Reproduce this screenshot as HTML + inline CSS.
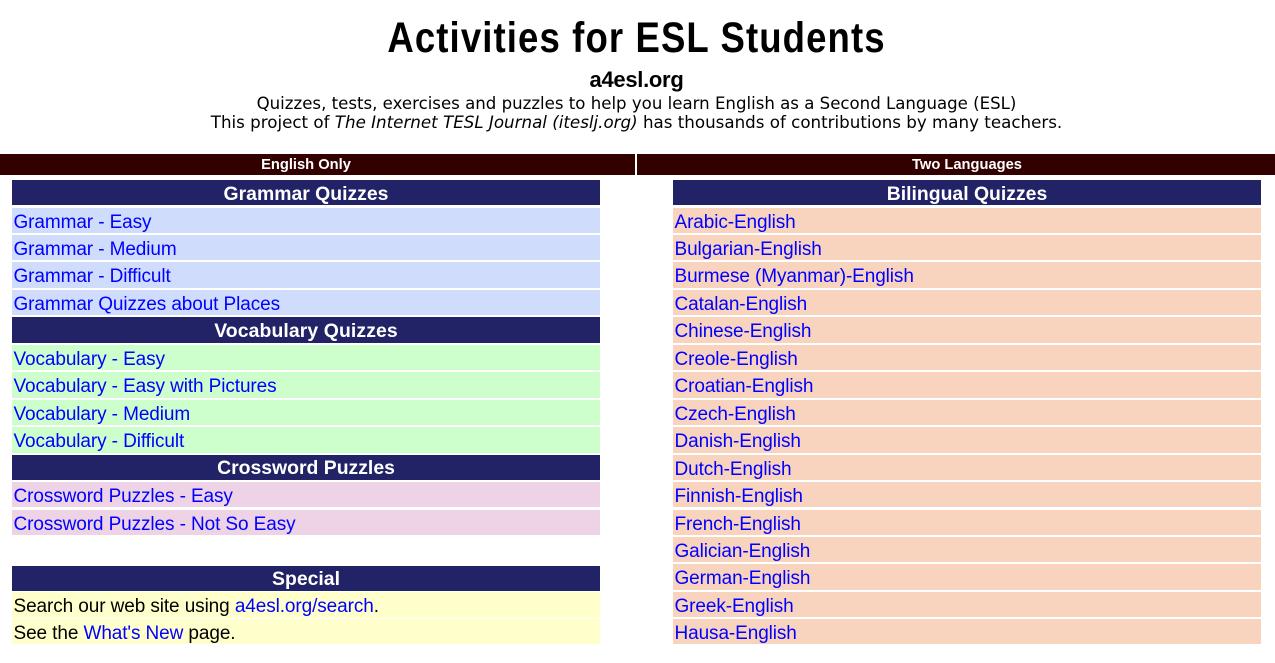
<!DOCTYPE html>
<html><head><meta charset="utf-8"><title>Activities for ESL Students</title>
<style>
html,body{margin:0;padding:0;background:#fff;width:1275px;height:663px;overflow:hidden}
body{position:relative;font-family:"Liberation Sans",Arial,sans-serif;color:#000}
a{color:#0000ff;text-decoration:none}
.c{position:absolute;white-space:nowrap}
.ti{left:0;width:1275px;text-align:center}
.t{font-family:"DejaVu Sans",sans-serif;font-size:16.6px;line-height:19px;left:0;width:1273px;text-align:center;position:absolute;white-space:nowrap}
.bar{position:absolute;top:154px;height:21px;background:#330000;color:#fff;font-weight:bold;font-size:14.7px;line-height:23px;text-align:center;box-sizing:border-box}
.r,.h{position:absolute;width:588px;white-space:nowrap;box-sizing:border-box}
.h{background:#222266;color:#fff;font-weight:bold;text-align:center;font-size:19.4px;line-height:28px}
.r{padding-left:1.5px;font-size:19px;letter-spacing:-.1px;line-height:29px}
.L{left:12px}.R{left:673px}
.b{background:#cfdcfb}.g{background:#ccffcc}.p{background:#eed2e6}.y{background:#ffffcc}.o{background:#f8d4be}
</style></head><body>
<div class="c ti" style="top:13px;font:bold 43px/50px 'Liberation Sans',sans-serif;letter-spacing:1.3px;left:-1px;transform:scaleX(.85)">Activities for ESL Students</div>
<div class="c ti" style="top:66px;font:bold 22px/28px 'Liberation Sans',sans-serif;letter-spacing:-.3px;left:-1px">a4esl.org</div>
<div class="t" style="top:94px">Quizzes, tests, exercises and puzzles to help you learn English as a Second Language (ESL)</div>
<div class="t" style="top:113px;font-size:16.7px">This project of <i>The Internet TESL Journal (iteslj.org)</i> has thousands of contributions by many teachers.</div>
<div class="bar" style="left:0;width:635px;padding-right:23px">English Only</div>
<div class="bar" style="left:637px;width:638px"><span style="position:relative;left:11px">Two Languages</span></div>

<div class="h L" style="top:180px;height:25px">Grammar Quizzes</div>
<div class="r L b" style="top:208px;height:25px"><a href="#">Grammar - Easy</a></div>
<div class="r L b" style="top:235px;height:25px"><a href="#">Grammar - Medium</a></div>
<div class="r L b" style="top:262px;height:26px"><a href="#">Grammar - Difficult</a></div>
<div class="r L b" style="top:290px;height:25px"><a href="#">Grammar Quizzes about Places</a></div>
<div class="h L" style="top:317px;height:26px;letter-spacing:.1px">Vocabulary Quizzes</div>
<div class="r L g" style="top:345px;height:25px"><a href="#">Vocabulary - Easy</a></div>
<div class="r L g" style="top:372px;height:26px"><a href="#">Vocabulary - Easy with Pictures</a></div>
<div class="r L g" style="top:400px;height:25px"><a href="#">Vocabulary - Medium</a></div>
<div class="r L g" style="top:427px;height:26px"><a href="#">Vocabulary - Difficult</a></div>
<div class="h L" style="top:455px;height:25px;line-height:26px">Crossword Puzzles</div>
<div class="r L p" style="top:482px;height:25px"><a href="#">Crossword Puzzles - Easy</a></div>
<div class="r L p" style="top:510px;height:25px"><a href="#">Crossword Puzzles - Not So Easy</a></div>
<div class="h L" style="top:566px;height:25px;line-height:26px">Special</div>
<div class="r L y" style="top:592px;height:26px;line-height:30px">Search our web site using <a href="#">a4esl.org/search</a>.</div>
<div class="r L y" style="top:619px;height:25px;line-height:30px">See the <a href="#">What's New</a> page.</div>

<div class="h R" style="top:180px;height:25px">Bilingual Quizzes</div>
<div class="r R o" style="top:208px;height:25px"><a href="#">Arabic-English</a></div>
<div class="r R o" style="top:235px;height:25px"><a href="#">Bulgarian-English</a></div>
<div class="r R o" style="top:262px;height:26px"><a href="#">Burmese (Myanmar)-English</a></div>
<div class="r R o" style="top:290px;height:25px"><a href="#">Catalan-English</a></div>
<div class="r R o" style="top:317px;height:26px"><a href="#">Chinese-English</a></div>
<div class="r R o" style="top:345px;height:25px"><a href="#">Creole-English</a></div>
<div class="r R o" style="top:372px;height:26px"><a href="#">Croatian-English</a></div>
<div class="r R o" style="top:400px;height:25px"><a href="#">Czech-English</a></div>
<div class="r R o" style="top:427px;height:26px"><a href="#">Danish-English</a></div>
<div class="r R o" style="top:455px;height:25px"><a href="#">Dutch-English</a></div>
<div class="r R o" style="top:482px;height:25px"><a href="#">Finnish-English</a></div>
<div class="r R o" style="top:510px;height:25px"><a href="#">French-English</a></div>
<div class="r R o" style="top:537px;height:25px"><a href="#">Galician-English</a></div>
<div class="r R o" style="top:564px;height:26px"><a href="#">German-English</a></div>
<div class="r R o" style="top:592px;height:25px"><a href="#">Greek-English</a></div>
<div class="r R o" style="top:619px;height:25px"><a href="#">Hausa-English</a></div>
</body></html>
